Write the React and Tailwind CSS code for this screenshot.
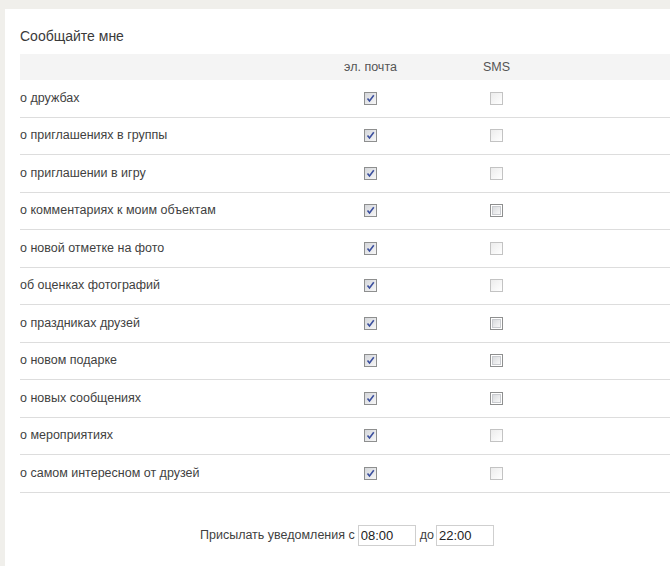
import React from "react";

const rows = [
  { label: "о дружбах", sms: false },
  { label: "о приглашениях в группы", sms: false },
  { label: "о приглашении в игру", sms: false },
  { label: "о комментариях к моим объектам", sms: true },
  { label: "о новой отметке на фото", sms: false },
  { label: "об оценках фотографий", sms: false },
  { label: "о праздниках друзей", sms: true },
  { label: "о новом подарке", sms: true },
  { label: "о новых сообщениях", sms: true },
  { label: "о мероприятиях", sms: false },
  { label: "о самом интересном от друзей", sms: false },
];

const CheckedBox = () => (
  <span className="relative block w-[13px] h-[13px] border border-[#8e8f8f] bg-gradient-to-br from-[#d4d6da] to-[#f7f7f7]">
    <svg viewBox="0 0 11 11" className="absolute left-0 top-0 w-[11px] h-[11px]">
      <path d="M2.5 5.5 L4.5 8 L8.8 2.2" fill="none" stroke="#3b4f9e" strokeWidth="1.6" />
    </svg>
  </span>
);

const EmptyBox = ({ enabled }) =>
  enabled ? (
    <span className="block w-[13px] h-[13px] border border-[#8e8f8f] p-px bg-white">
      <span className="block w-full h-full border border-[#c9cbcf] bg-gradient-to-br from-[#d9dbde] to-[#f8f8f8]" />
    </span>
  ) : (
    <span className="block w-[13px] h-[13px] border border-[#c3c3c3] bg-gradient-to-br from-[#ececec] to-[#ffffff]" />
  );

export default function App() {
  return (
    <div className="w-full min-h-screen bg-[#f0efeb] pt-[9px] pl-[5px] font-['Liberation_Sans',Arial,sans-serif]">
      <div className="bg-white min-h-[557px] pl-[15px] pt-[18px]">
        <p className="text-[14px] leading-[18px] text-[#3a3a3a]">Сообщайте мне</p>

        <div className="mt-[9px] flex items-center h-[26px] bg-[#f4f4f4] text-[12.5px] text-[#555]">
          <div className="w-[334px]" />
          <div className="w-[33px] flex justify-center whitespace-nowrap">эл. почта</div>
          <div className="w-[93px]" />
          <div className="w-[33px] flex justify-center whitespace-nowrap">SMS</div>
        </div>

        {rows.map((row) => (
          <div
            key={row.label}
            className="flex items-center h-[37.5px] border-b border-[#dddddd] text-[12.5px] text-[#3f3f3f]"
          >
            <div className="w-[334px] whitespace-nowrap">{row.label}</div>
            <div className="w-[33px] flex justify-center">
              <CheckedBox />
            </div>
            <div className="w-[93px]" />
            <div className="w-[33px] flex justify-center">
              <EmptyBox enabled={row.sms} />
            </div>
          </div>
        ))}

        <div className="flex items-center justify-center pt-[32px] pl-[4px] text-[12.5px] text-[#3f3f3f]">
          <span>Присылать уведомления с</span>
          <input
            defaultValue="08:00"
            className="ml-[3px] w-[58px] h-[21px] border border-[#cfcfcf] px-[2px] text-[13px] text-[#222] outline-none"
          />
          <span className="ml-[4px]">до</span>
          <input
            defaultValue="22:00"
            className="ml-[2px] w-[58px] h-[21px] border border-[#cfcfcf] px-[2px] text-[13px] text-[#222] outline-none"
          />
        </div>
      </div>
    </div>
  );
}
